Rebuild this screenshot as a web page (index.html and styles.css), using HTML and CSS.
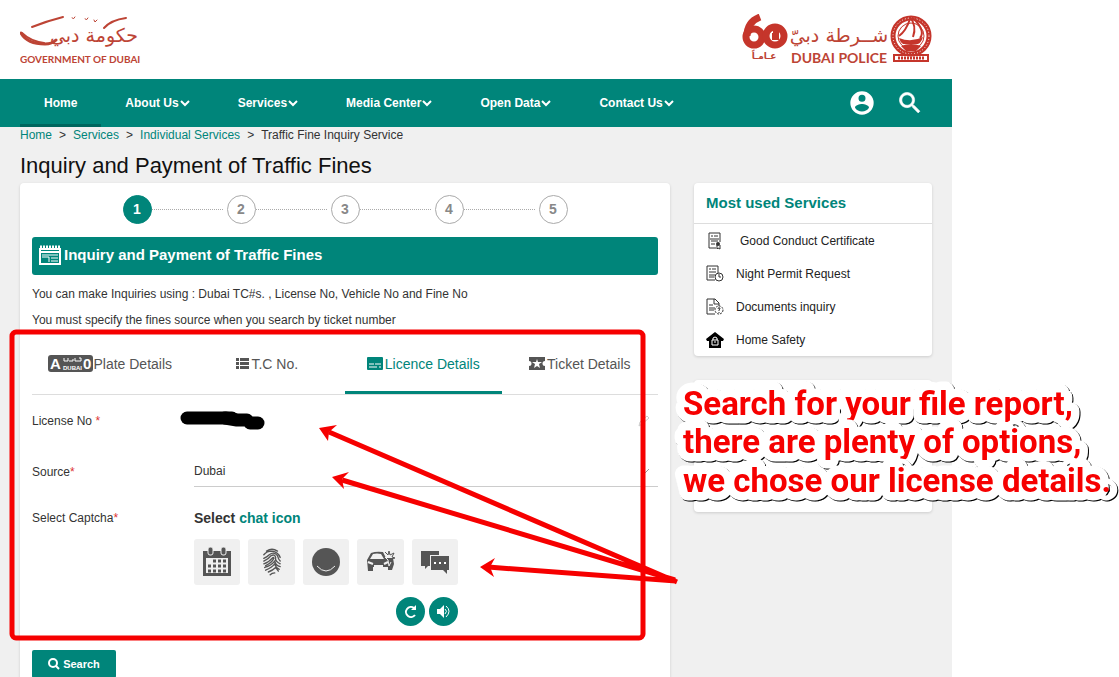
FILE: index.html
```html
<!DOCTYPE html>
<html lang="en">

<head>
    <meta charset="UTF-8">
    <meta name="viewport" content="width=device-width, initial-scale=1.0">
    <title>Inquiry and Payment of Traffic Fines</title>
    <link rel="stylesheet" href="styles.css">
</head>

<body>
    <div class="page">
        <header class="header">
            <svg class="gov_logo" width="124" height="52" viewBox="0 0 124 52">
                <g fill="none" stroke="#bd4435" stroke-linecap="round">
                    <path d="M12 13Q27 7 43 3" stroke-width="2" />
                    <path d="M1 19Q7 30 25 30Q32 30 36 26" stroke-width="3" />
                    <path d="M2 19Q10 27 24 29" stroke-width="2" />
                    <path d="M84 14Q91 6 106 4" stroke-width="2" />
                    <path d="M52 4q2 2 3-1M65 5q2 2 3-1M74 6l1 2 2-2" stroke-width="1" />
                </g>
                <g class="logo_red">
                    <text x="74" y="28" class="gov_arabic">حكومة دبي</text>
                    <text x="0" y="49" class="gov_name">GOVERNMENT OF DUBAI</text>
                </g>
            </svg>
            <svg class="police_logo" width="190" height="52" viewBox="0 0 190 52">
                <g fill="none" stroke="#c5352b">
                    <circle cx="12" cy="23" r="8" stroke-width="7" />
                    <circle cx="33" cy="22" r="9" stroke-width="7" />
                    <path d="M5 22Q5 8 18 3" stroke-width="7" />
                </g>
                <path d="M30 19h1v-3h6v10h-7z" fill="#c5352b" />
                <g class="logo_red">
                    <text x="22" y="45" class="year_arabic">عـامـاً</text>
                    <text x="97" y="28" class="police_arabic">شــرطة دبيّ</text>
                    <text x="49" y="49" class="police_name">DUBAI POLICE</text>
                </g>
                <g fill="none" stroke="#c5352b">
                    <circle cx="169" cy="22" r="18" stroke-width="5" />
                    <circle cx="169" cy="22" r="18" stroke="#fff" stroke-width="1" stroke-dasharray="1 2" />
                    <circle cx="169" cy="22" r="13" stroke-width="1" />
                    <path d="M168 3Q175 12 171 23M168 5Q164 17 157 22M171 4Q184 17 178 24" stroke-width="2" />
                    <path d="M152 41h34v6h-34z" stroke-width="2" />
                    <path d="M156 44h27" stroke-width="3" stroke-dasharray="2 1" />
                </g>
                <path d="M157 24q12 5 24-1q-2 6-5 7h-15q-3-2-4-6zM159 32q10-4 20 0l-5 5h-10z" fill="#c5352b" />
            </svg>
        </header>

        <nav class="nav">
            <a href="#" class="nav_item active">Home</a>
            <a href="#" class="nav_item">About Us<svg width="10" height="7" viewBox="0 0 10 7"><path d="M1 1l4 4 4-4" /></svg></a>
            <a href="#" class="nav_item">Services<svg width="10" height="7" viewBox="0 0 10 7"><path d="M1 1l4 4 4-4" /></svg></a>
            <a href="#" class="nav_item">Media Center<svg width="10" height="7" viewBox="0 0 10 7"><path d="M1 1l4 4 4-4" /></svg></a>
            <a href="#" class="nav_item">Open Data<svg width="10" height="7" viewBox="0 0 10 7"><path d="M1 1l4 4 4-4" /></svg></a>
            <a href="#" class="nav_item">Contact Us<svg width="10" height="7" viewBox="0 0 10 7"><path d="M1 1l4 4 4-4" /></svg></a>
            <div class="nav_tools">
                <button class="icon_btn" aria-label="Account">
                    <svg width="28" height="28" viewBox="0 0 24 24"><path fill="#fff" d="M12 2a10 10 0 1 0 0 20 10 10 0 0 0 0-20zm0 3a3 3 0 1 1 0 6 3 3 0 0 1 0-6zm0 14.200a7.200 7.200 0 0 1-6-3.220c.030-1.990 4-3.080 6-3.080s5.970 1.090 6 3.080a7.200 7.200 0 0 1-6 3.220z" /></svg>
                </button>
                <button class="icon_btn" aria-label="Search site">
                    <svg width="28" height="28" viewBox="0 0 24 24"><path fill="#fff" stroke="#fff" stroke-width=".5" d="M15.500 14h-.8l-.3-.3A6.500 6.500 0 1 0 13.700 14.400l.3.3v.8l5 5 1.500-1.500zM9.500 14a4.500 4.500 0 1 1 0-9 4.500 4.500 0 0 1 0 9z" /></svg>
                </button>
            </div>
        </nav>

        <div class="breadcrumb">
            <a href="#">Home</a><span>&gt;</span><a href="#">Services</a><span>&gt;</span><a href="#">Individual Services</a><span>&gt;</span>Traffic Fine Inquiry Service
        </div>
        <h1 class="title">Inquiry and Payment of Traffic Fines</h1>

        <div class="content">
            <main class="card form_card">
                <div class="steps">
                    <div class="step current">1</div>
                    <div class="line"></div>
                    <div class="step">2</div>
                    <div class="line"></div>
                    <div class="step">3</div>
                    <div class="line"></div>
                    <div class="step">4</div>
                    <div class="line"></div>
                    <div class="step">5</div>
                </div>

                <h2 class="banner">
                    <svg width="22" height="20" viewBox="0 0 22 20"><path d="M1 4h20v15H1zM1 7h20" fill="none" stroke="#fff" stroke-width="2" /><path d="M1 2h20" stroke="#fff" stroke-width="3" stroke-dasharray="2 1" /><path d="M3 10h16M12 13h7M12 16h7M3 12h7v5" fill="none" stroke="#fff" stroke-width="1" /></svg>
                    Inquiry and Payment of Traffic Fines
                </h2>
                <p class="note">You can make Inquiries using : Dubai TC#s. , License No, Vehicle No and Fine No</p>
                <p class="note">You must specify the fines source when you search by ticket number</p>

                <div class="tabs">
                    <button class="tab">
                        <svg width="45" height="17" viewBox="0 0 45 17">
                            <rect width="45" height="17" rx="3" fill="#555" />
                            <text x="2" y="14" class="plate_big">A</text>
                            <text x="35" y="14" class="plate_big">0</text>
                            <text x="15" y="15" class="plate_small">DUBAI</text>
                            <path d="M16 3v3h4V3M21 6h4V4M27 3v3h3M31 3h2v3h-3" fill="none" stroke="#fff" />
                        </svg>Plate Details
                    </button>
                    <button class="tab">
                        <svg width="16" height="12" viewBox="0 0 16 12"><path d="M1 0h3v3H1zM5 0h9v3H5zM1 4h3v3H1zM5 4h9v3H5zM1 8h3v3H1zM5 8h9v3H5z" fill="#555" /></svg>T.C No.
                    </button>
                    <button class="tab selected">
                        <svg width="18" height="13" viewBox="0 0 18 13"><rect width="16" height="13" rx="1" fill="#00857a" /><path d="M2 7h5M8 7h6M2 10h8M12 10h2" stroke="#fff" stroke-width="1" /></svg>Licence Details
                    </button>
                    <button class="tab">
                        <svg width="18" height="13" viewBox="0 0 18 13"><path d="M0 0h16v4a2 2 0 0 0 0 5v4H0V9a2 2 0 0 0 0-5z" fill="#555" /><path d="M8 2l1 3h4l-3 2 1 4-3-2-3 2 1-4-3-2h4z" fill="#fff" /></svg>Ticket Details
                    </button>
                </div>

                <form class="form">
                    <div class="row">
                        <label for="license">License No <b>*</b></label>
                        <div class="field">
                            <input id="license" class="input" type="text">
                            <svg class="edit" width="12" height="12" viewBox="0 0 12 12"><path d="M1 11l1-4 7-6 2 2-7 6z" fill="none" stroke="#ccc" /></svg>
                        </div>
                    </div>
                    <div class="row">
                        <label for="source">Source<b>*</b></label>
                        <div class="field underline">
                            <select id="source" class="input">
                                <option>Dubai</option>
                            </select>
                            <svg class="edit" width="10" height="6" viewBox="0 0 10 6"><path d="M1 1l4 4 4-4" fill="none" stroke="#999" /></svg>
                        </div>
                    </div>
                    <div class="row captcha_row">
                        <div class="label">Select Captcha<b>*</b></div>
                        <div class="captcha">
                            <div class="prompt">Select <span>chat icon</span></div>
                            <div class="tiles">
                                <button type="button" class="tile" aria-label="Calendar">
                                    <svg width="30" height="30" viewBox="0 0 30 30"><path d="M1 4h28v25H1z" fill="#555" /><path d="M4 11h22v15H4z" fill="#f0f0f0" /><path d="M11 14h15M6 19h20M6 24h20" stroke="#555" stroke-width="3" stroke-dasharray="3 2" /><g fill="#555" stroke="#f0f0f0"><rect x="6" y="0" width="5" height="8" rx="2" /><rect x="19" y="0" width="5" height="8" rx="2" /></g></svg>
                                </button>
                                <button type="button" class="tile" aria-label="Fingerprint">
                                    <svg width="20" height="30" viewBox="0 0 22 30"><g fill="none" stroke="#555" stroke-width="1.500" stroke-linecap="round"><path d="M5 3Q11-1 17 3M2 7Q5 3 11 3Q18 4 20 10M2 11Q6 9 8 7Q13 3 17 8Q18 12 20 14M2 14Q8 11 10 8Q14 6 15 10Q14 14 20 17M2 17Q8 15 11 11Q13 9 13 11Q11 16 4 19M3 21Q10 19 14 14Q15 19 20 20M4 24Q11 21 14 17Q15 21 19 23M7 26Q12 24 15 21L18 25M9 29Q11 27 14 27" /></g></svg>
                                </button>
                                <button type="button" class="tile" aria-label="Smile">
                                    <svg width="30" height="30" viewBox="0 0 30 30"><circle cx="15" cy="15" r="14" fill="#555" /><path d="M6 19q9 10 18 0" fill="none" stroke="#f0f0f0" /></svg>
                                </button>
                                <button type="button" class="tile" aria-label="Car crash">
                                    <svg width="30" height="24" viewBox="0 0 30 24"><path d="M2 10l4-7q5-2 12-1l3 6h7l1 6-2 6h-4v-3H8v4H3z" fill="#555" /><path d="M5 9l3-5q4-1 8 0l3 5z" fill="#f0f0f0" /><path d="M3 12l5 2M19 14l4-2M9 16h9" stroke="#f0f0f0" stroke-width="2" /><path d="M20 2l3 3 1-4 1 4 4-2-2 4 3 1-4 1" fill="none" stroke="#555" /><path d="M20 7l3 3 1 6 2-4" fill="none" stroke="#f0f0f0" /></svg>
                                </button>
                                <button type="button" class="tile" aria-label="Chat">
                                    <svg width="30" height="24" viewBox="0 0 30 24"><path d="M1 1h18v4H10v11H8l-3 3v-3H1z" fill="#555" /><path d="M11 6h18v14h-2v4l-4-4H11z" fill="#555" /><path d="M14 13h12" stroke="#fff" stroke-width="2" stroke-dasharray="2 3" /></svg>
                                </button>
                            </div>
                            <div class="captcha_tools">
                                <button type="button" class="round_btn" aria-label="Refresh">
                                    <svg width="15" height="15" viewBox="0 0 15 15"><path d="M11 4a5 5 0 1 0 1 7" fill="none" stroke="#fff" stroke-width="2" /><path d="M8 6h5V1z" fill="#fff" /></svg>
                                </button>
                                <button type="button" class="round_btn" aria-label="Listen">
                                    <svg width="15" height="15" viewBox="0 0 15 15"><path d="M1 5h3l4-4v13l-4-4H1z" fill="#fff" /><path d="M9 5q3 2 0 5M10 2q6 5 0 11" fill="none" stroke="#fff" /></svg>
                                </button>
                            </div>
                        </div>
                    </div>
                    <button type="button" class="search_btn">
                        <svg width="12" height="12" viewBox="0 0 12 12"><circle cx="5" cy="5" r="4" fill="none" stroke="#fff" stroke-width="2" /><path d="M8 8l3 3" stroke="#fff" stroke-width="2" /></svg>
                        Search
                    </button>
                </form>
            </main>

            <aside class="sidebar">
                <div class="card">
                    <h3 class="side_title">Most used Services</h3>
                    <a href="#" class="service first">
                        <svg width="18" height="18" viewBox="0 0 18 18"><path d="M10 16H3V1h11v9M5 4h2M8 4h4M4 7h9M5 9h7M5 12h4" fill="none" stroke="#333" /><circle cx="12" cy="12" r="2" fill="#333" /><path d="M11 13v4l1-1 2 1v-4" fill="none" stroke="#333" /></svg>
                        Good Conduct Certificate
                    </a>
                    <a href="#" class="service">
                        <svg width="18" height="18" viewBox="0 0 18 18"><path d="M9 15H1V1h11v7M3 4h2M6 4h4M3 7h7M3 10h6M3 12h5" fill="none" stroke="#333" /><circle cx="13" cy="12" r="4" fill="#fff" stroke="#333" /><path d="M13 9v3h2" fill="none" stroke="#333" /></svg>
                        Night Permit Request
                    </a>
                    <a href="#" class="service">
                        <svg width="18" height="18" viewBox="0 0 18 18"><path d="M9 16H1V1h8l4 4v3M8 1v5h5M3 7h4M3 10h6M3 12h5" fill="none" stroke="#333" /><circle cx="13" cy="12" r="4" fill="#fff" stroke="#333" stroke-dasharray="2 1" /><path d="M12 11q0-2 2-1 0 1-1 2v1M13 14v1" fill="none" stroke="#333" /></svg>
                        Documents inquiry
                    </a>
                    <a href="#" class="service">
                        <svg width="18" height="18" viewBox="0 0 18 18"><path d="M9 1l9 7-1 2h-2v7H3v-7H1L0 8z" fill="#000" /><path d="M6 9h6v5H6zM7 9V7q2-2 4 0v2" fill="none" stroke="#fff" /><path d="M9 10v2" stroke="#fff" /></svg>
                        Home Safety
                    </a>
                </div>
                <div class="card side_empty"></div>
            </aside>
        </div>
    </div>

    <!-- notes drawn over the page -->
    <svg class="marks" width="1119" height="677" viewBox="0 0 1119 677">
        <rect x="12" y="332" width="631" height="306" rx="4" fill="none" stroke="#f60000" stroke-width="5" />
        <g fill="none" stroke="#000" stroke-linecap="round" stroke-linejoin="round">
            <path d="M187 418h45" stroke-width="13" />
            <path d="M225 418l12 2h10" stroke-width="13" />
            <path d="M250 423h8" stroke-width="13" />
        </g>
        <g stroke="#f60000" stroke-width="5">
            <path d="M329 432L677 582M342 480L675 580M488 567L676 581" />
        </g>
        <g fill="#f60000">
            <path d="M319 428l18-3-8 7-1 9z" />
            <path d="M332 477l17-5-7 7 2 10z" />
            <path d="M480 567l15-9-5 9 4 10z" />
        </g>
        <g class="caption">
            <text x="683" y="415">Search for your file report,</text>
            <text x="683" y="453">there are plenty of options,</text>
            <text x="683" y="492">we chose our license details.</text>
        </g>
    </svg>
</body>

</html>
```
FILE: styles.css
```css
* {
    margin: 0;
    padding: 0;
    box-sizing: border-box;
}

body {
    position: relative;
    height: 100vh;
    overflow: hidden;
    background-color: #fff;
    font-family: "Liberation Sans", Arial, sans-serif;
    font-size: 12px;
    color: #333;
}

a {
    text-decoration: none;
    color: #00857a;
}

button {
    font-family: inherit;
    border: none;
    background: none;
    cursor: pointer;
}

.page {
    max-width: 952px;
    min-height: 100vh;
    background-color: #f0f0f0;
}

.header {
    display: flex;
    justify-content: space-between;
    padding: 14px 20px 13px;
    background-color: #fff;
}

.logo_red {
    fill: #bd4435;
}

.gov_arabic {
    font: 19px "DejaVu Sans", sans-serif;
    text-anchor: middle;
}

.gov_name {
    font: bold 10px "Lato", sans-serif;
}

.police_arabic {
    font: 19px "DejaVu Sans", sans-serif;
    text-anchor: middle;
}

.police_name {
    font: bold 14px "Lato", sans-serif;
}

.year_arabic {
    font: bold 9px "DejaVu Sans", sans-serif;
    text-anchor: middle;
}

.nav {
    display: flex;
    height: 48px;
    padding: 0 20px;
    background-color: #00857a;
}

.nav_item {
    display: flex;
    align-items: center;
    gap: 1px;
    padding: 0 24px;
    border-top: 3px solid transparent;
    border-bottom: 3px solid transparent;
    color: #fff;
    font-size: 12px;
    font-weight: bold;
}

.nav_item path {
    fill: none;
    stroke: #fff;
    stroke-width: 2;
}

.nav_item.active {
    border-bottom-color: #00665e;
}

.nav_tools {
    display: flex;
    align-items: center;
    gap: 20px;
    margin-left: auto;
    padding-right: 8px;
}

.icon_btn {
    width: 28px;
    height: 28px;
}

.breadcrumb {
    padding: 0 20px;
    line-height: 16px;
}

.breadcrumb span {
    padding: 0 7px;
}

.title {
    padding: 10px 20px 4px;
    font-size: 22px;
    font-weight: normal;
    line-height: 26px;
    color: #111;
}

.content {
    display: flex;
    gap: 24px;
    padding: 0 20px;
}

.card {
    background-color: #fff;
    border-radius: 4px;
    box-shadow: 0 1px 3px rgba(0, 0, 0, 0.15);
}

.form_card {
    flex: 1;
    padding: 12px;
}

.steps {
    display: flex;
    align-items: center;
    justify-content: center;
}

.step {
    width: 29px;
    height: 29px;
    border: 1px solid #aaa;
    border-radius: 50%;
    text-align: center;
    line-height: 26px;
    font-size: 14px;
    font-weight: bold;
    color: #888;
}

.step.current {
    background-color: #00857a;
    border-color: #00857a;
    color: #fff;
}

.line {
    width: 71px;
    margin-right: 4px;
    border-top: 1px dotted #aaa;
}

.banner {
    display: flex;
    align-items: center;
    gap: 3px;
    height: 38px;
    margin: 13px 0 6px;
    padding: 0 7px 3px;
    border-radius: 3px;
    background-color: #00857a;
    color: #fff;
    font-size: 15px;
}

.note {
    line-height: 26px;
}

.tabs {
    display: flex;
    border-bottom: 1px solid #ddd;
}

.tab {
    display: flex;
    flex: 1;
    align-items: center;
    justify-content: center;
    height: 61px;
    border-top: 3px solid transparent;
    border-bottom: 3px solid transparent;
    font-size: 14px;
    color: #555;
}

.tab.selected {
    color: #00857a;
    border-bottom-color: #00857a;
}

.plate_big {
    font: bold 15px "Liberation Sans", Arial, sans-serif;
    fill: #fff;
}

.plate_small {
    font: bold 6px "Liberation Sans", Arial, sans-serif;
    fill: #fff;
}

.row {
    display: flex;
    align-items: center;
    height: 51px;
}

.row label,
.label {
    width: 162px;
    font-size: 12px;
}

.row b {
    color: #d33;
    font-weight: normal;
}

.field {
    display: flex;
    flex: 1;
    align-items: center;
    height: 31px;
    padding-right: 8px;
}

.underline {
    border-bottom: 1px solid #ccc;
}

.input {
    flex: 1;
    min-width: 0;
    height: 30px;
    border: none;
    outline: none;
    appearance: none;
    background: none;
    font-family: inherit;
    font-size: 12px;
    color: #333;
}

.captcha_row {
    align-items: flex-start;
    height: auto;
    padding-top: 11px;
}

.label,
.prompt {
    line-height: 20px;
}

.prompt {
    font-size: 14px;
    font-weight: bold;
}

.prompt span {
    color: #00857a;
}

.captcha {
    width: 264px;
}

.tiles {
    display: flex;
    gap: 8px;
    margin-top: 11px;
}

.tile {
    display: flex;
    flex: 1;
    align-items: center;
    justify-content: center;
    height: 46px;
    border-radius: 3px;
    background-color: #f0f0f0;
}

.captcha_tools {
    display: flex;
    justify-content: flex-end;
    gap: 4px;
    margin-top: 12px;
}

.round_btn {
    display: flex;
    align-items: center;
    justify-content: center;
    width: 29px;
    height: 29px;
    border-radius: 50%;
    background-color: #00857a;
}

.search_btn {
    display: flex;
    align-items: center;
    justify-content: center;
    gap: 3px;
    width: 84px;
    height: 28px;
    margin: 24px 0 12px;
    border-radius: 2px;
    background-color: #00857a;
    color: #fff;
    font-size: 11px;
    font-weight: bold;
}

.sidebar {
    flex: 0 0 238px;
}

.side_title {
    padding: 0 12px;
    border-bottom: 1px solid #ddd;
    font-size: 15px;
    line-height: 40px;
    color: #00857a;
}

.service {
    display: flex;
    align-items: center;
    gap: 12px;
    height: 33px;
    padding: 0 12px;
    color: #222;
}

.service.first {
    gap: 16px;
}

.side_empty {
    height: 132px;
    margin-top: 24px;
}

.marks {
    position: absolute;
    top: 0;
    left: 0;
    pointer-events: none;
}

.caption text {
    font: bold 33px Roboto, sans-serif;
    fill: #f60000;
    stroke: #fff;
    stroke-width: 17px;
    stroke-linejoin: round;
    paint-order: stroke;
    filter: drop-shadow(1px 1px 0 #000);
}
```
